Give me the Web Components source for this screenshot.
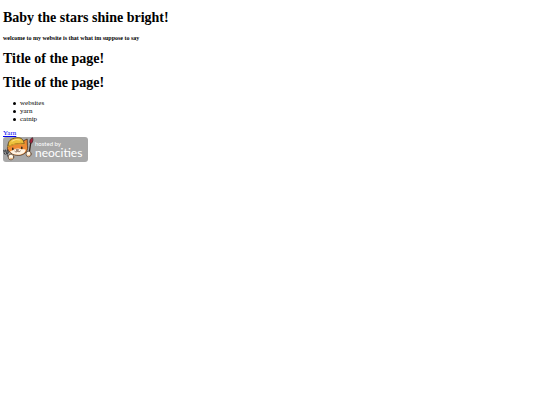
<!DOCTYPE html>
<html lang="en">
<head>
<meta charset="utf-8">
<title>Baby the stars shine bright!</title>
<style>
  body { margin: 0; background: #fff; color: #000; font-family: "Liberation Serif", "Times New Roman", serif; }
</style>
</head>
<body>
<star-page>
  <page-heading>Baby the stars shine bright!</page-heading>
  <page-tagline>welcome to my website is that what im suppose to say</page-tagline>
  <page-heading>Title of the page!</page-heading>
  <page-heading>Title of the page!</page-heading>
  <topic-list items="websites,yarn,catnip"></topic-list>
  <page-link href="#yarn">Yarn</page-link>
  <host-badge></host-badge>
</star-page>
<script>
  const define = (name, html, setup) => {
    const template = document.createElement('template');
    template.innerHTML = html;
    customElements.define(name, class extends HTMLElement {
      constructor() {
        super();
        this.attachShadow({ mode: 'open' }).append(template.content.cloneNode(true));
      }
      connectedCallback() {
        if (setup) setup(this, this.shadowRoot);
      }
    });
  };

  define('star-page', `
    <style>
      :host { display: block; padding: 10px 3px; }
      main { display: flow-root; }
    </style>
    <main><slot></slot></main>`);

  define('page-heading', `
    <style>
      :host { display: block; margin: 0 0 8px; }
      h1 { margin: 0; font-size: 14px; line-height: 16px; }
    </style>
    <h1><slot></slot></h1>`);

  define('page-tagline', `
    <style>
      :host { display: block; margin: 0 0 9px; }
      h5 { margin: 0; font-size: 6px; line-height: 8px; }
    </style>
    <h5><slot></slot></h5>`);

  define('topic-list', `
    <style>
      :host { display: block; margin: 0 0 6px; }
      ul { margin: 0; padding: 0 0 0 10px; list-style: none; font-size: 7px; line-height: 8px; }
      li { display: flex; align-items: center; gap: 4px; }
      li::before { content: ""; width: 3px; height: 3px; border-radius: 50%; background: #000; }
    </style>
    <ul></ul>`, (host, root) => {
      root.querySelector('ul').replaceChildren(...host.getAttribute('items').split(',').map(text => {
        const item = document.createElement('li');
        item.textContent = text;
        return item;
      }));
    });

  define('page-link', `
    <style>
      :host { display: block; font-size: 7px; line-height: 8px; }
      a { color: #0000ee; text-decoration: underline; }
    </style>
    <a><slot></slot></a>`, (host, root) => {
      root.querySelector('a').href = host.getAttribute('href');
    });

  define('host-badge', `
    <style>
      :host { display: block; }
      a { display: inline-block; vertical-align: top; }
      svg { display: block; }
      text { font-family: Lato, "Open Sans", sans-serif; fill: #fff; }
    </style>
    <a href="#host" aria-label="hosted by neocities">
      <svg width="85" height="25" viewBox="0 0 85 25">
        <rect width="85" height="25" rx="3" fill="#a8a8a8"/>
        <g stroke-linecap="round" stroke-linejoin="round">
          <path d="M3.5 17 7 22M.9 13.5 1.6 16.6 3.5 17.4 5.2 15.6 4.6 12.8M2.7 13.2 3.5 17" fill="none" stroke="#3c3e42" stroke-width="1.3"/>
          <path d="M1.6 15.2 3.8 18.2" fill="none" stroke="#d8d8d8" stroke-width=".6"/>
          <path d="M27.7 6 26.4 15" stroke="#39251c" stroke-width="1.3"/>
          <path d="M26.8 5.6C26.4 3.2 27.6 1.2 29.6.7 30.4 3 29.8 5 28.5 6.2Z" fill="#a81f38" stroke="#38242b" stroke-width=".7"/>
          <path d="M4.6 10 5.6 6 9 5.5 20.5 3.8 24.2 2 24.4 8.2C25.6 13 22.5 17 18 18.1 12 19.2 6.2 16.5 4.6 12Z" fill="#ef8a34" stroke="#49311e" stroke-width=".8"/>
          <path d="M7 14.4C9 13.2 10.5 13.3 12.8 11.8L15.6 11.5C18 12.6 20.5 11.8 22.8 12.8 22 15.4 20.5 17 17.8 17.5 12.5 18.3 8.6 16.8 7 14.4Z" fill="#fff3e2"/>
          <path d="M5.4 9.5C4 4.3 8 1.3 13.8.8 18.2.4 20.6 2.4 21.2 6.6 17 5.8 10 7 5.4 9.5Z" fill="#edc13c" stroke="#5b431b" stroke-width=".8"/>
          <path d="M5 9.6C10 6.9 16 6.1 21.6 7.3" fill="none" stroke="#d9a52b" stroke-width="1.1"/>
          <path d="M9 4.2 13 2.5 17 3" fill="none" stroke="#ffe486" stroke-width="1"/>
          <path d="M9.8 11.2v1.3M18.8 10.2v1.3" stroke="#29221e" stroke-width="1.4"/>
          <path d="M13.4 12.7h2.2L14.6 14ZM11.8 14.3c1 1 2.2.8 2.8-.3.8 1 2 1 2.8 0" fill="none" stroke="#64402c" stroke-width=".7"/>
          <ellipse cx="8" cy="20" rx="2.8" ry="2.9" fill="#fff8e9" stroke="#62452e" stroke-width=".8"/>
          <ellipse cx="25.6" cy="17" rx="2.6" ry="2.8" fill="#fff8e9" stroke="#62452e" stroke-width=".8"/>
          <path d="M7 21.2Q8 22.2 9.2 21.3M24.6 18.4Q25.6 19.2 26.6 18.4" fill="none" stroke="#ed9b49" stroke-width=".8"/>
        </g>
        <text x="32" y="9" font-size="6">hosted by</text>
        <text x="32" y="20" font-size="12">neocities</text>
      </svg>
    </a>`);
</script>
</body>
</html>
